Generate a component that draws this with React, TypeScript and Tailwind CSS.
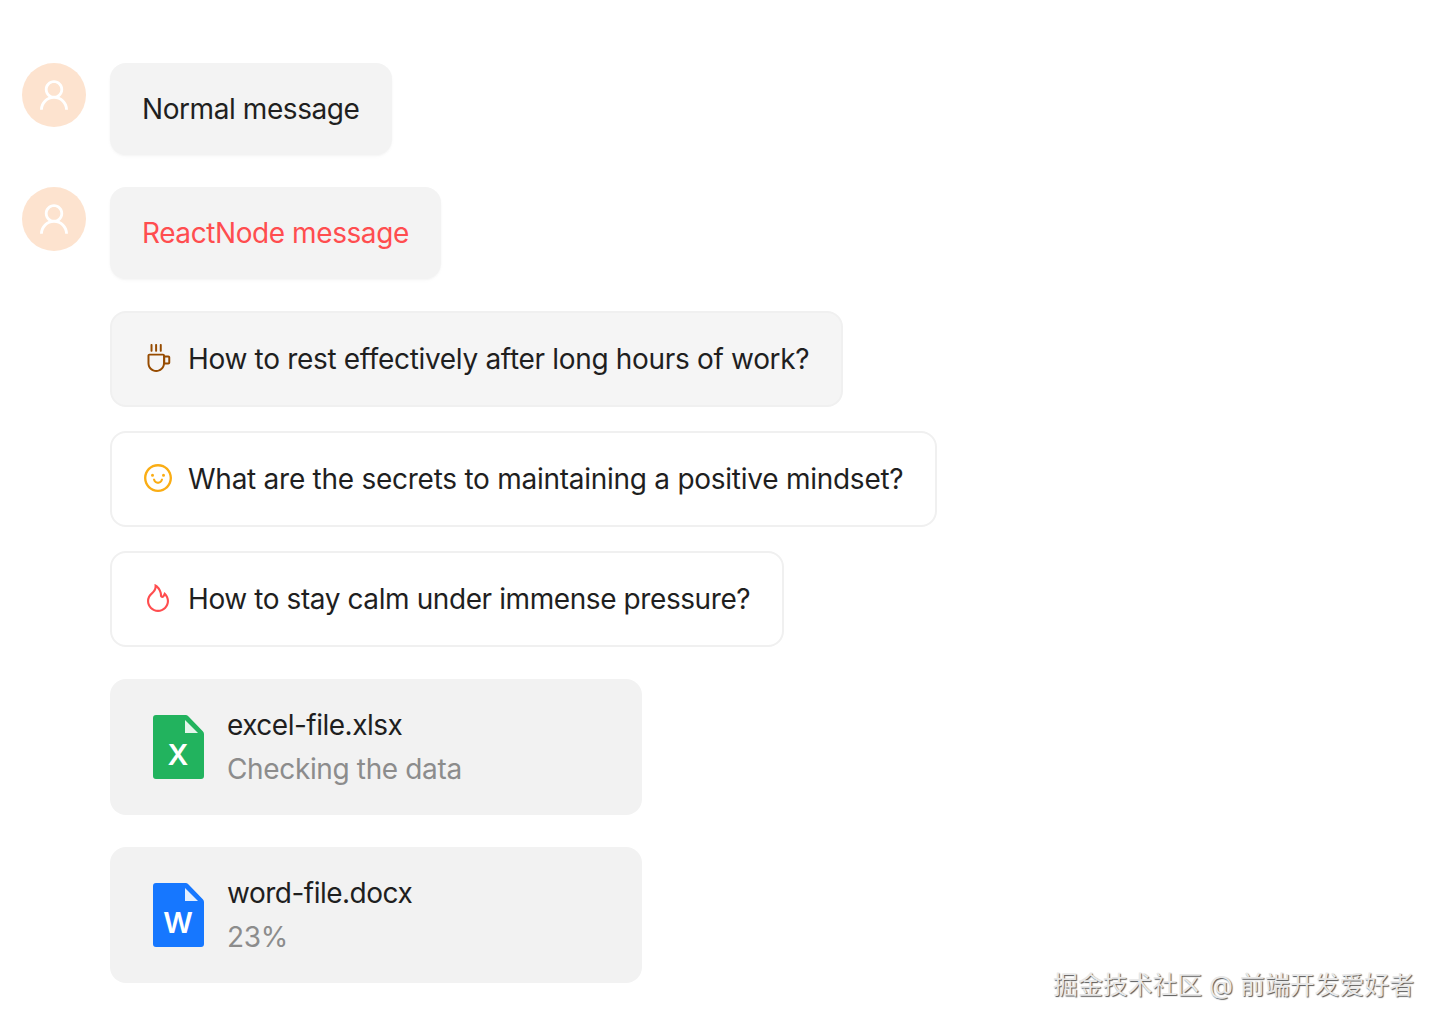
import { AiOutlineCoffee, AiOutlineFire, AiOutlineSmile, AiOutlineUser } from 'react-icons/ai';
import type { ReactNode } from 'react';

const bubbleShadow = 'shadow-[0_1px_2px_rgba(0,0,0,0.03),0_2px_4px_rgba(0,0,0,0.02)]';

function Avatar() {
  return (
    <div className="w-16 h-16 shrink-0 rounded-full bg-[#fde3cf] flex items-center justify-center text-white">
      <AiOutlineUser className="w-[38px] h-[38px]" />
    </div>
  );
}

function Bubble({ children }: { children: ReactNode }) {
  return <div className={`w-fit rounded-2xl bg-[#f3f3f3] px-8 py-6 leading-[44px] tracking-[-0.42px] ${bubbleShadow}`}>{children}</div>;
}

function Prompt({ icon, label, filled, tracking }: { icon: ReactNode; label: string; filled?: boolean; tracking: string }) {
  return (
    <div className={`w-fit h-24 flex items-center gap-4 rounded-2xl border-2 border-[#f0f0f0] px-8 ${filled ? 'bg-[#f5f5f5]' : 'bg-white'}`}>
      <span className="w-7 h-7 -mt-0.5 flex items-center justify-center">{icon}</span>
      <span className={`leading-[44px] ${tracking}`}>{label}</span>
    </div>
  );
}

function FileIcon({ color, letter }: { color: string; letter: string }) {
  return (
    <svg viewBox="0 0 51 64" className="w-[51px] h-16 shrink-0">
      <path d="M3 0h29.500a4 4 0 0 1 2.800 1.200l14.500 15a4 4 0 0 1 1.200 2.800v42a3 3 0 0 1-3 3H3a3 3 0 0 1-3-3V3a3 3 0 0 1 3-3z" fill={color} />
      <path d="M32 5v13h13z" fill="#fff" fillOpacity="0.88" />
      <text x="25" y="50" textAnchor="middle" fontSize="29" fontWeight="600" fontFamily="Inter, sans-serif" fill="#fff">{letter}</text>
    </svg>
  );
}

function FileCard({ color, letter, name, desc }: { color: string; letter: string; name: string; desc: string }) {
  return (
    <div className="w-[532px] h-[136px] flex items-center gap-[23px] rounded-2xl bg-[#f2f2f2] pl-[43px]">
      <FileIcon color={color} letter={letter} />
      <div className="leading-[44px] tracking-[-0.5px]">
        <div>{name}</div>
        <div className="text-[#8c8c8c] tracking-[-0.36px]">{desc}</div>
      </div>
    </div>
  );
}

export default function App() {
  return (
    <div className="relative h-[1026px] bg-white pt-[63px] pl-[22px] text-[28px] text-[#1f1f1f] font-['Inter','Noto_Sans_CJK_SC',sans-serif]">
      <div className="flex gap-6 mb-8">
        <Avatar />
        <Bubble>Normal message</Bubble>
      </div>
      <div className="flex gap-6 mb-8">
        <Avatar />
        <Bubble><span className="text-[#ff4d4f]">ReactNode message</span></Bubble>
      </div>

      <div className="ml-[88px] flex flex-col gap-6 mb-8">
        <Prompt filled tracking="tracking-[-0.32px]" icon={<AiOutlineCoffee className="w-7 h-7 shrink-0 text-[#964b00]" />} label="How to rest effectively after long hours of work?" />
        <Prompt tracking="tracking-[-0.26px]" icon={<AiOutlineSmile className="w-8 h-8 shrink-0 text-[#faad14]" />} label="What are the secrets to maintaining a positive mindset?" />
        <Prompt tracking="tracking-[-0.41px]" icon={<AiOutlineFire className="w-8 h-8 shrink-0 text-[#ff4d4f]" />} label="How to stay calm under immense pressure?" />
      </div>

      <div className="ml-[88px] flex flex-col gap-8">
        <FileCard color="#22b35e" letter="X" name="excel-file.xlsx" desc="Checking the data" />
        <FileCard color="#1677ff" letter="W" name="word-file.docx" desc="23%" />
      </div>

      {/* watermark */}
      <div className="absolute right-[28px] top-[968px] text-[24.850px] leading-[34px] text-[#e8e8e8] [text-shadow:1px_1px_1px_#555]">
        掘金技术社区 @ 前端开发爱好者
      </div>
    </div>
  );
}
